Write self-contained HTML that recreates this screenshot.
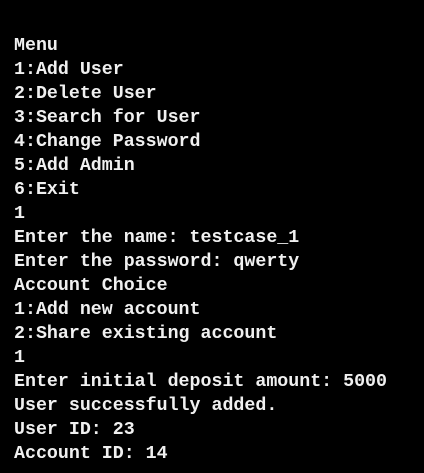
<!DOCTYPE html>
<html><head><style>
html,body{margin:0;padding:0;background:#000;width:424px;height:473px;overflow:hidden}
pre{margin:0;position:absolute;left:14px;top:34px;font-family:"Liberation Mono",monospace;font-size:18.3px;line-height:24px;color:#f0f0f0;font-weight:bold}
</style></head><body><pre>Menu
1:Add User
2:Delete User
3:Search for User
4:Change Password
5:Add Admin
6:Exit
1
Enter the name: testcase_1
Enter the password: qwerty
Account Choice
1:Add new account
2:Share existing account
1
Enter initial deposit amount: 5000
User successfully added.
User ID: 23
Account ID: 14</pre></body></html>
